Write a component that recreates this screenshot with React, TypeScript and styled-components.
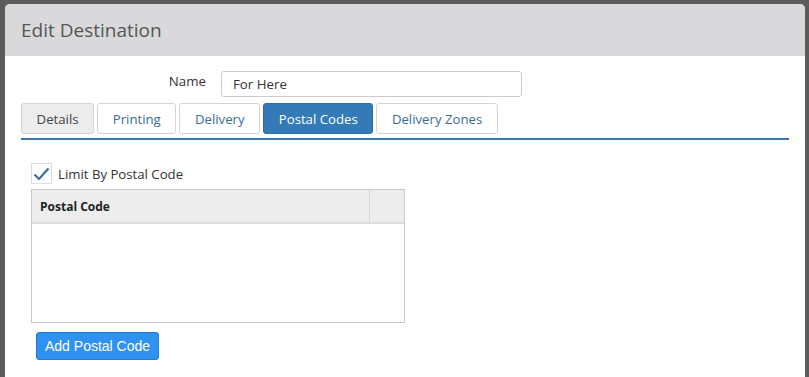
import React from 'react'
import styled, { createGlobalStyle } from 'styled-components'

const GlobalStyle = createGlobalStyle`
    html, body {
        margin: 0;
        padding: 0;
        background: #5b5b5b;
        font-family: "Open Sans", "Noto Sans", sans-serif;
        overflow: hidden;
    }
`

const Backdrop = styled.div`
    width: 809px;
    height: 377px;
    padding: 4px 4px 0 5px;
    box-sizing: border-box;
    background: #5b5b5b;
`

const Modal = styled.div`
    height: 100%;
    background: #fff;
    border-radius: 5px 5px 0 0;
    overflow: hidden;
`

const ModalHeader = styled.div`
    display: flex;
    align-items: center;
    height: 52px;
    padding: 0 16px;
    background: #d9d9dc;
    font-size: 19px;
    color: #555;
`

const ModalBody = styled.div`
    padding: 15px 16px 0 16px;
`

const NameRow = styled.div`
    display: flex;
    align-items: center;
    gap: 15px;
`

const NameLabel = styled.label`
    width: 185px;
    text-align: right;
    font-size: 13.3px;
    color: #333;
    position: relative;
    top: -3px;
`

const NameInput = styled.div`
    width: 301px;
    height: 26px;
    box-sizing: border-box;
    border: 1px solid #ccc;
    border-radius: 3px;
    padding: 0 11px;
    display: flex;
    align-items: center;
    font-size: 13.3px;
    color: #333;
`

const TabList = styled.div`
    display: flex;
    gap: 3px;
    margin-top: 6px;
    padding-bottom: 4px;
    border-bottom: 2px solid #3d76a8;
`

const Tab = styled.div<{ $active?: boolean; $muted?: boolean }>`
    height: 31px;
    box-sizing: border-box;
    padding: 0 14.6px;
    display: flex;
    align-items: center;
    font-size: 13.2px;
    border-radius: 3px;
    border: 1px solid ${p => (p.$active ? '#2e6da4' : '#d4d4d4')};
    background: ${p => (p.$active ? '#337ab7' : p.$muted ? '#ececec' : '#fff')};
    color: ${p => (p.$active ? '#fff' : p.$muted ? '#444' : '#3a6d96')};
`

const Content = styled.div`
    padding: 23px 0 0 10px;
`

const CheckRow = styled.div`
    display: flex;
    align-items: center;
    gap: 6px;
`

const CheckBox = styled.div`
    width: 21px;
    height: 21px;
    box-sizing: border-box;
    border: 1px solid #ddd;
    display: flex;
    align-items: center;
    justify-content: center;
`

const CheckLabel = styled.span`
    font-size: 13.2px;
    color: #333;
`

const Table = styled.div`
    width: 374px;
    height: 134px;
    box-sizing: border-box;
    margin-top: 5px;
    border: 1px solid #c8c8c8;
`

const TableHead = styled.div`
    display: grid;
    grid-template-columns: 1fr 35px;
    height: 32px;
    background: #ededed;
    border-bottom: 2px solid #dcdcdc;
`

const HeadCell = styled.div<{ $last?: boolean }>`
    display: flex;
    align-items: center;
    padding: 0 8px;
    font-size: 12px;
    font-weight: 700;
    color: #222;
    border-left: ${p => (p.$last ? '1px solid #dadada' : 'none')};
`

const AddButton = styled.button`
    margin: 9px 0 0 5px;
    height: 28px;
    padding: 0 8px;
    border: 1px solid #1f7ad8;
    border-radius: 3px;
    background: #2f91f0;
    color: #fff;
    font-family: "Liberation Sans", Arial, sans-serif;
    font-size: 14px;
`

const App = () => {
    return (
        <>
            <GlobalStyle />
            <Backdrop>
                <Modal>
                    <ModalHeader>Edit Destination</ModalHeader>
                    <ModalBody>
                        <NameRow>
                            <NameLabel>Name</NameLabel>
                            <NameInput>For Here</NameInput>
                        </NameRow>
                        <TabList>
                            <Tab $muted>Details</Tab>
                            <Tab>Printing</Tab>
                            <Tab>Delivery</Tab>
                            <Tab $active>Postal Codes</Tab>
                            <Tab>Delivery Zones</Tab>
                        </TabList>
                        <Content>
                            <CheckRow>
                                <CheckBox>
                                    <svg width="17" height="14" viewBox="0 0 17 14">
                                        <path d="M1.5 7.5 L6 12 L15.5 1.5" fill="none" stroke="#3b6e98" strokeWidth="2.2" />
                                    </svg>
                                </CheckBox>
                                <CheckLabel>Limit By Postal Code</CheckLabel>
                            </CheckRow>
                            <Table>
                                <TableHead>
                                    <HeadCell>Postal Code</HeadCell>
                                    <HeadCell $last />
                                </TableHead>
                            </Table>
                            <AddButton>Add Postal Code</AddButton>
                        </Content>
                    </ModalBody>
                </Modal>
            </Backdrop>
        </>
    )
}

export default App
